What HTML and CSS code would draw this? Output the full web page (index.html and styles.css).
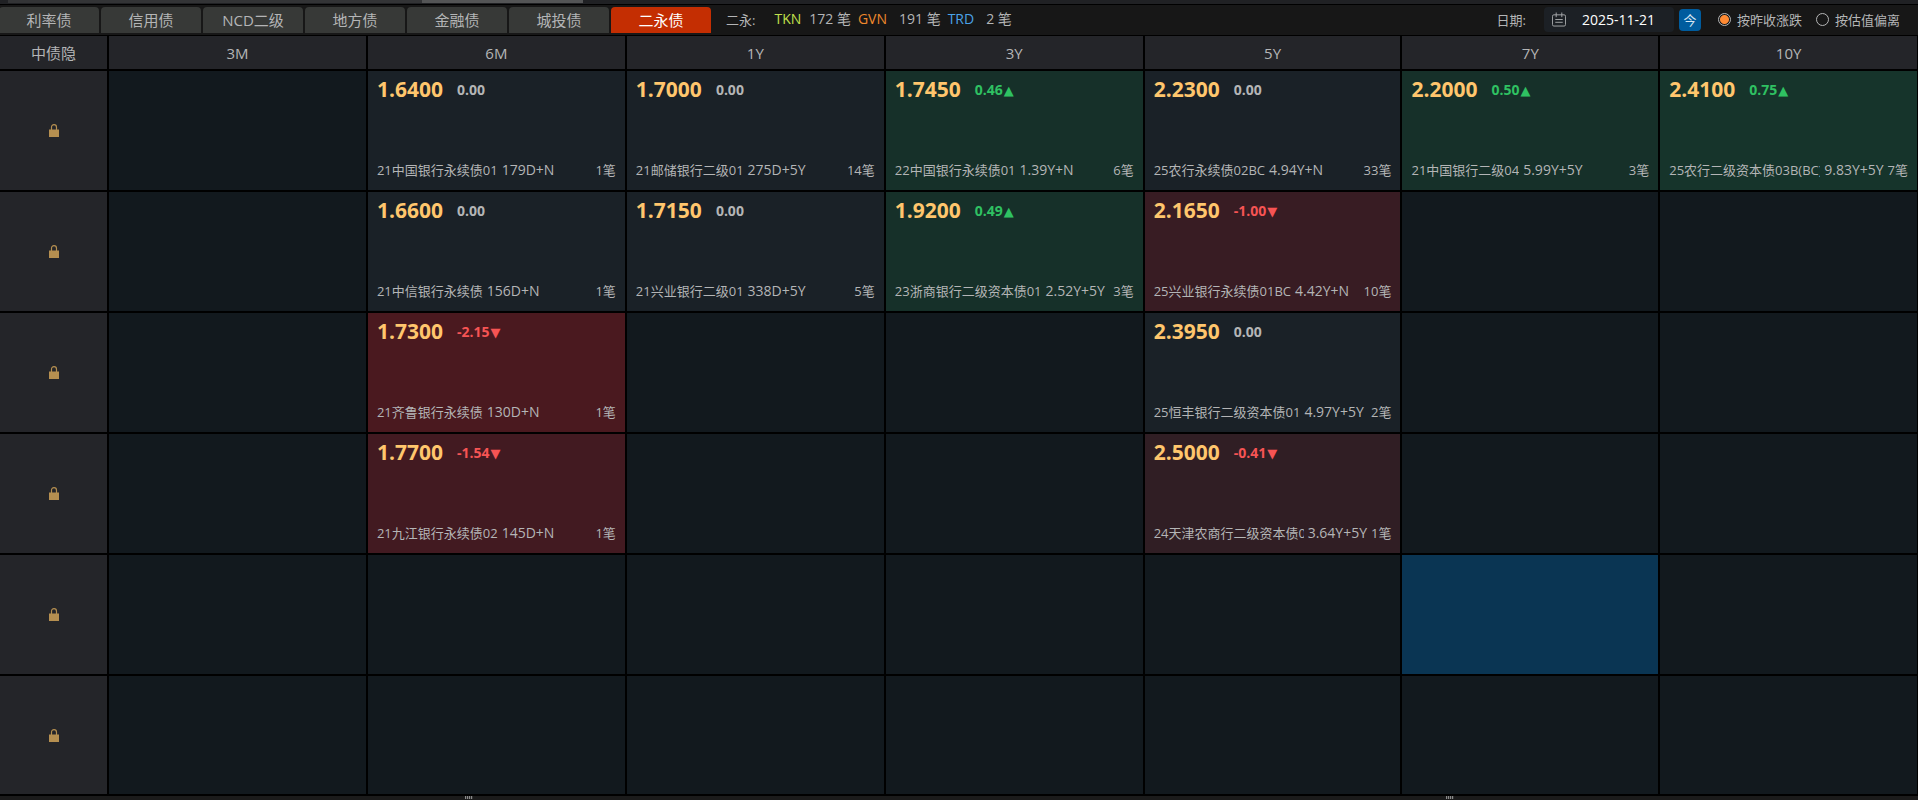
FILE: index.html
```html
<!DOCTYPE html>
<html lang="zh-CN">
<head>
  <meta charset="UTF-8">
  <meta name="viewport" content="width=device-width, initial-scale=1.0">
  <title>二永债</title>
  <link rel="stylesheet" href="styles.css">
</head>
<body>
  <svg class="sprite" aria-hidden="true">
    <symbol id="lock" viewBox="0 0 10 13">
      <path d="M2.5 6V3.2C2.5 1.6 3.5.7 5 .7s2.500.9 2.500 2.500V6" fill="none" stroke="currentColor" stroke-width="1.200"/>
      <path d="M0 5.500h10V13H0z" fill="currentColor"/>
    </symbol>
  </svg>

  <div class="scroll-strip"><div class="scroll-track"><div class="scroll-thumb"></div></div></div>

  <header class="toolbar">
    <nav class="tabs">
      <button class="tab">利率债</button>
      <button class="tab">信用债</button>
      <button class="tab">NCD二级</button>
      <button class="tab">地方债</button>
      <button class="tab">金融债</button>
      <button class="tab">城投债</button>
      <button class="tab active">二永债</button>
    </nav>
    <div class="stats">
      <span class="stats-title">二永:</span>
      <span class="stat"><b class="tkn">TKN</b>172 笔</span>
      <span class="stat"><b class="gvn">GVN</b>191 笔</span>
      <span class="stat"><b class="trd">TRD</b>2 笔</span>
    </div>
    <form class="filters">
      <label for="date">日期:</label>
      <div class="date-box">
        <svg width="15" height="15" viewBox="0 0 15 15" fill="none" stroke="#a9abad">
          <rect x="0.500" y="2.500" width="14" height="12" rx="1.500"/>
          <path d="M4.500 0v5M10.500 0v5M3.500 7.500h8M3.500 10.500h8"/>
        </svg>
        <input type="text" id="date" value="2025-11-21">
      </div>
      <button type="button" class="today">今</button>
      <label class="radio"><input type="radio" name="mode" checked>按昨收涨跌</label>
      <label class="radio"><input type="radio" name="mode">按估值偏离</label>
    </form>
  </header>

  <table class="matrix">
    <thead>
      <tr>
        <th class="rating">中债隐</th>
        <th class="short">3M</th>
        <th class="short">6M</th>
        <th class="short">1Y</th>
        <th class="short">3Y</th>
        <th>5Y</th>
        <th>7Y</th>
        <th>10Y</th>
      </tr>
    </thead>
    <tbody>
      <tr>
        <th class="rating"><svg class="lock"><use href="#lock"/></svg></th>
        <td></td>
        <td class="flat">
          <div class="quote">
            <div class="top"><span class="price">1.6400</span><span class="diff">0.00</span></div>
            <div class="bottom"><span class="name">21中国银行永续债01</span><span class="term">179D+N</span><span class="count">1笔</span></div>
          </div>
        </td>
        <td class="flat">
          <div class="quote">
            <div class="top"><span class="price">1.7000</span><span class="diff">0.00</span></div>
            <div class="bottom"><span class="name">21邮储银行二级01</span><span class="term">275D+5Y</span><span class="count">14笔</span></div>
          </div>
        </td>
        <td class="up">
          <div class="quote">
            <div class="top"><span class="price">1.7450</span><span class="diff">0.46</span></div>
            <div class="bottom"><span class="name">22中国银行永续债01</span><span class="term">1.39Y+N</span><span class="count">6笔</span></div>
          </div>
        </td>
        <td class="flat">
          <div class="quote">
            <div class="top"><span class="price">2.2300</span><span class="diff">0.00</span></div>
            <div class="bottom"><span class="name">25农行永续债02BC</span><span class="term">4.94Y+N</span><span class="count">33笔</span></div>
          </div>
        </td>
        <td class="up">
          <div class="quote">
            <div class="top"><span class="price">2.2000</span><span class="diff">0.50</span></div>
            <div class="bottom"><span class="name">21中国银行二级04</span><span class="term">5.99Y+5Y</span><span class="count">3笔</span></div>
          </div>
        </td>
        <td class="up up-2">
          <div class="quote">
            <div class="top"><span class="price">2.4100</span><span class="diff">0.75</span></div>
            <div class="bottom"><span class="name">25农行二级资本债03B(BC)</span><span class="term">9.83Y+5Y</span><span class="count">7笔</span></div>
          </div>
        </td>
      </tr>
      <tr>
        <th class="rating"><svg class="lock"><use href="#lock"/></svg></th>
        <td></td>
        <td class="flat">
          <div class="quote">
            <div class="top"><span class="price">1.6600</span><span class="diff">0.00</span></div>
            <div class="bottom"><span class="name">21中信银行永续债</span><span class="term">156D+N</span><span class="count">1笔</span></div>
          </div>
        </td>
        <td class="flat">
          <div class="quote">
            <div class="top"><span class="price">1.7150</span><span class="diff">0.00</span></div>
            <div class="bottom"><span class="name">21兴业银行二级01</span><span class="term">338D+5Y</span><span class="count">5笔</span></div>
          </div>
        </td>
        <td class="up">
          <div class="quote">
            <div class="top"><span class="price">1.9200</span><span class="diff">0.49</span></div>
            <div class="bottom"><span class="name">23浙商银行二级资本债01</span><span class="term">2.52Y+5Y</span><span class="count">3笔</span></div>
          </div>
        </td>
        <td class="down down-2">
          <div class="quote">
            <div class="top"><span class="price">2.1650</span><span class="diff">-1.00</span></div>
            <div class="bottom"><span class="name">25兴业银行永续债01BC</span><span class="term">4.42Y+N</span><span class="count">10笔</span></div>
          </div>
        </td>
        <td></td>
        <td></td>
      </tr>
      <tr>
        <th class="rating"><svg class="lock"><use href="#lock"/></svg></th>
        <td></td>
        <td class="down down-4">
          <div class="quote">
            <div class="top"><span class="price">1.7300</span><span class="diff">-2.15</span></div>
            <div class="bottom"><span class="name">21齐鲁银行永续债</span><span class="term">130D+N</span><span class="count">1笔</span></div>
          </div>
        </td>
        <td></td>
        <td></td>
        <td class="flat">
          <div class="quote">
            <div class="top"><span class="price">2.3950</span><span class="diff">0.00</span></div>
            <div class="bottom"><span class="name">25恒丰银行二级资本债01</span><span class="term">4.97Y+5Y</span><span class="count">2笔</span></div>
          </div>
        </td>
        <td></td>
        <td></td>
      </tr>
      <tr>
        <th class="rating"><svg class="lock"><use href="#lock"/></svg></th>
        <td></td>
        <td class="down down-3">
          <div class="quote">
            <div class="top"><span class="price">1.7700</span><span class="diff">-1.54</span></div>
            <div class="bottom"><span class="name">21九江银行永续债02</span><span class="term">145D+N</span><span class="count">1笔</span></div>
          </div>
        </td>
        <td></td>
        <td></td>
        <td class="down">
          <div class="quote">
            <div class="top"><span class="price">2.5000</span><span class="diff">-0.41</span></div>
            <div class="bottom"><span class="name">24天津农商行二级资本债01</span><span class="term">3.64Y+5Y</span><span class="count">1笔</span></div>
          </div>
        </td>
        <td></td>
        <td></td>
      </tr>
      <tr>
        <th class="rating"><svg class="lock"><use href="#lock"/></svg></th>
        <td></td>
        <td></td>
        <td></td>
        <td></td>
        <td></td>
        <td class="selected"></td>
        <td></td>
      </tr>
      <tr>
        <th class="rating"><svg class="lock"><use href="#lock"/></svg></th>
        <td></td>
        <td></td>
        <td></td>
        <td></td>
        <td></td>
        <td></td>
        <td></td>
      </tr>
    </tbody>
  </table>

  <footer class="splitters">
    <div class="splitter"><span class="grip"></span></div>
    <div class="splitter"><span class="grip"></span></div>
  </footer>
</body>
</html>
```
FILE: styles.css
```css
:root {
  --line: #000;
  --text: #b4b5b6;
  --head: #242529;
}
* {
  box-sizing: border-box;
}
body {
  margin: 0;
  background: #1b1b1b;
  color: var(--text);
  font-family: "Open Sans", "Noto Sans CJK SC", sans-serif;
  font-size: 13px;
}
button, input {
  font: inherit;
  color: inherit;
  border: none;
  padding: 0;
  margin: 0;
}
.sprite {
  display: none;
}

/* scrollbar of the panel above */
.scroll-strip {
  height: 5px;
  padding: 0 8px;
  background: #202124;
  border-bottom: 1px solid var(--line);
}
.scroll-track {
  width: 575px;
  height: 3px;
  background: #333436;
}
.scroll-thumb {
  width: 28%;
  height: 3px;
  margin-left: auto;
  background: #545556;
}

.toolbar {
  display: flex;
  align-items: center;
  height: 31px;
  background: #171717;
  border-bottom: 1px solid var(--line);
}
.tabs {
  display: flex;
  gap: 2px;
  align-self: flex-end;
  margin: 0 0 2px -1px;
}
.tab {
  width: 100px;
  height: 26px;
  border-radius: 4px 4px 0 0;
  background: #373937;
  font-size: 15px;
  line-height: 26px;
  cursor: pointer;
}
.tab.active {
  background: #c42e02;
  color: #fff;
}
.stats {
  display: flex;
  gap: 9px;
  margin-left: 15px;
  padding-bottom: 2px;
  white-space: nowrap;
}
.stats-title {
  margin-right: 10px;
}
.stat b {
  margin-right: 8px;
  font-weight: 400;
}
.stat .tkn {
  color: #c0e04c;
}
.stat .gvn {
  color: #f0882c;
}
.stat .trd {
  color: #4aa3e8;
}
.stat + .stat b {
  margin-right: 12px;
}
.stat {
  font-size: 14px;
  line-height: 18px;
}
.stat + .stat {
  margin-left: -2px;
}

.filters {
  display: flex;
  align-items: center;
  margin-left: auto;
  padding-right: 18px;
  padding-bottom: 1px;
  white-space: nowrap;
}
.date-box {
  display: flex;
  align-items: center;
  width: 130px;
  height: 25px;
  margin: 0 5px 0 18px;
  padding: 0 8px;
  border-radius: 4px;
  background: #1c2025;
}
.date-box input {
  width: 84px;
  margin-left: 16px;
  background: none;
  color: #fff;
  font-size: 14px;
}
.today {
  width: 22px;
  height: 22px;
  margin-right: 3px;
  border-radius: 4px;
  background: #005c9e;
  color: #d5e6f3;
  line-height: 22px;
}
.radio {
  display: flex;
  align-items: center;
  gap: 6px;
  margin-left: 14px;
}
.radio input {
  appearance: none;
  width: 13px;
  height: 13px;
  border: 1px solid #b4b5b6;
  border-radius: 50%;
}
.radio input:checked {
  background: radial-gradient(circle, #ff8a33 4px, transparent 5px);
}

.matrix {
  width: 100%;
  table-layout: fixed;
  border-collapse: separate;
  border-spacing: 0;
}
.matrix th, .matrix td {
  height: 121px;
  padding: 0;
  border: solid var(--line);
  border-width: 0 2px 2px 0;
  background: #12191e;
  font-weight: 400;
}
.matrix th {
  background: var(--head);
}
.matrix thead th {
  height: 35px;
  font-size: 15px;
  line-height: 20px;
}
.matrix tr > :last-child {
  border-right-width: 1px;
}
.matrix tbody tr:last-child > * {
  height: 120px;
}
.matrix .rating {
  width: 109px;
}
.matrix .short {
  width: 13.5%;
}
.lock {
  display: block;
  width: 10px;
  height: 13px;
  margin: 0 auto;
  color: #b58f50;
}

/* cell colours, deeper for a larger move */
.matrix .flat {
  background: #1a2127;
}
.matrix .up {
  background: #163029;
}
.matrix .up-2 {
  background: #16342b;
}
.matrix .down {
  background: #301e24;
}
.matrix .down-2 {
  background: #381c23;
}
.matrix .down-3 {
  background: #421a21;
}
.matrix .down-4 {
  background: #4a191f;
}
.matrix .selected {
  background: #0a3553;
}

.quote {
  display: flex;
  flex-direction: column;
  justify-content: space-between;
  height: 119px;
  padding: 5px 9px 10px 9px;
}
.top {
  display: flex;
  align-items: center;
  gap: 14px;
  height: 26px;
  font-weight: 700;
}
.price {
  color: #ffc66d;
  font-size: 21px;
}
.diff {
  font-size: 14px;
}
.up .diff {
  color: #2fc162;
}
.up .diff::after {
  content: "▲";
}
.down .diff {
  color: #f65454;
}
.down .diff::after {
  content: "▼";
}
.diff::after {
  margin-left: 1px;
  font-family: "DejaVu Sans", sans-serif;
  font-size: 13px;
  font-weight: 400;
}
.bottom {
  display: flex;
  gap: 4px;
  line-height: 20px;
  white-space: nowrap;
}
.name {
  overflow: hidden;
}
.term {
  font-size: 14px;
}
.count {
  margin-left: auto;
}

.splitters {
  display: flex;
  gap: 44px;
  height: 4px;
}
.splitter {
  display: flex;
  flex: 1;
  justify-content: center;
}
.grip {
  width: 8px;
  height: 3px;
  background: repeating-linear-gradient(90deg, #8a8a8a 0 1px, #333 1px 2px);
}
```
